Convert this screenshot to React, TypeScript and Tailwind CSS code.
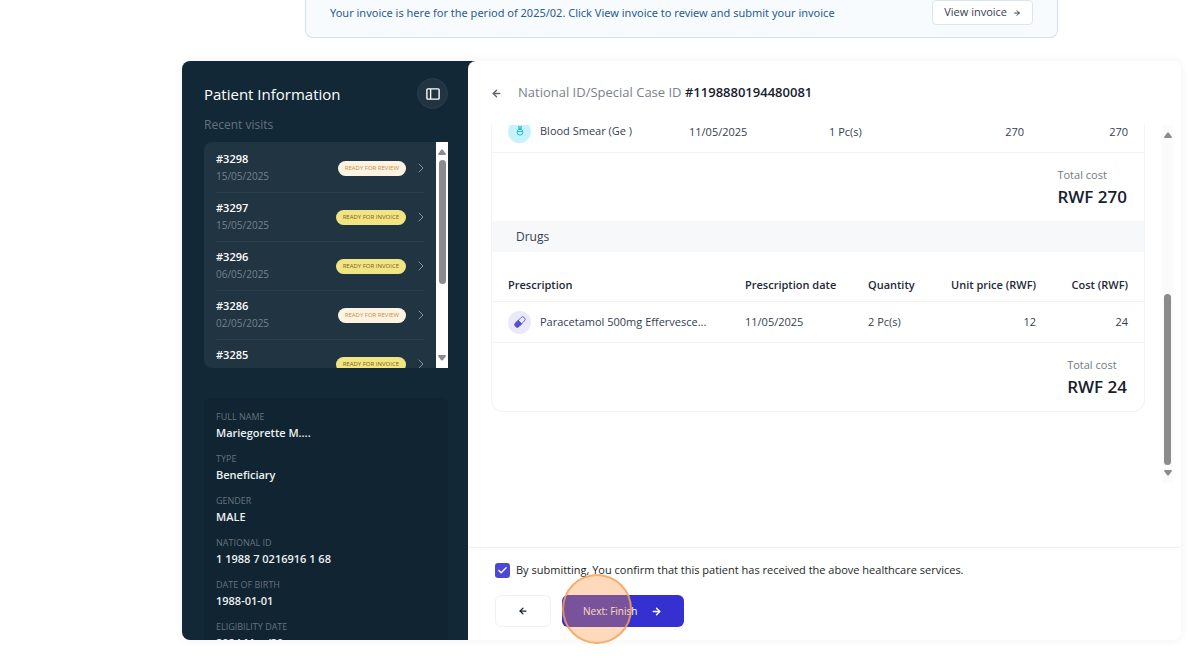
import { ArrowLeft, ArrowRight, Check, ChevronRight } from 'lucide-react';

type Status = 'review' | 'invoice';

const visits: { id: string; date: string; status: Status }[] = [
  { id: '#3298', date: '15/05/2025', status: 'review' },
  { id: '#3297', date: '15/05/2025', status: 'invoice' },
  { id: '#3296', date: '06/05/2025', status: 'invoice' },
  { id: '#3286', date: '02/05/2025', status: 'review' },
  { id: '#3285', date: '02/05/2025', status: 'invoice' },
];

const details = [
  { label: 'Full name', value: 'Mariegorette M....' },
  { label: 'Type', value: 'Beneficiary' },
  { label: 'Gender', value: 'MALE' },
  { label: 'National ID', value: '1 1988 7 0216916 1 68' },
  { label: 'Date of birth', value: '1988-01-01' },
  { label: 'Eligibility date', value: '2024 May/30' },
];

export default function App() {
  return (
    <div className="h-screen overflow-hidden bg-white pl-[182px] pr-[19px] font-['Open_Sans',sans-serif] text-[11px] text-[#344054]">
      <InvoiceBanner />
      <div className="mt-[23px] flex h-[calc(100vh-91px)] rounded-lg shadow-[0_0_10px_rgba(16,24,40,0.06)]">
        <Sidebar />
        <Consultation />
      </div>
    </div>
  );
}

function InvoiceBanner() {
  return (
    <div className="mx-auto flex max-w-[753px] items-start justify-between rounded-b-lg border border-t-0 border-[#cfe2f3] bg-[#f7fbfe] px-6 pb-3">
      <p className="pt-1 font-['Noto_Sans',sans-serif] text-[11px] leading-[18px] text-[#2b5c92]">
        Your invoice is here for the period of 2025/02. Click View invoice to review and submit your invoice
      </p>
      <button className="flex h-[25px] items-center gap-1.5 rounded border border-[#d9e6ee] bg-white px-[11px] text-[11px] text-[#344054]">
        View invoice
        <ArrowRight size={8} strokeWidth={3} />
      </button>
    </div>
  );
}

function Sidebar() {
  return (
    <aside className="w-[294px] shrink-0 overflow-hidden rounded-l-lg bg-[#122836] pr-7 pl-[22px]">
      <div className="flex items-center justify-between pt-[17px]">
        <h2 className="text-[15px] leading-5 font-medium text-white">Patient Information</h2>
        <button
          aria-label="Toggle sidebar"
          className="grid size-[31px] place-items-center rounded-full border border-[#2a3d49] bg-[#203442] text-white"
        >
          <svg width="14" height="12" viewBox="0 0 14 12" fill="none" stroke="currentColor" strokeWidth="1.4">
            <rect x="0.9" y="0.9" width="12.2" height="10.2" rx="0.8" />
            <path d="M4.6 1v10" />
          </svg>
        </button>
      </div>
      <p className="mt-[7px] text-xs leading-[17px] text-[#64737e]">Recent visits</p>

      <div className="mt-[9px] flex h-[226px] overflow-hidden rounded-l-lg bg-[#203442]">
        <ul className="flex-1 px-3 pt-0.5">
          {visits.map((v) => (
            <li key={v.id} className="flex h-[49px] items-center border-b border-[#2a3f4c]">
              <div className="flex-1">
                <div className="text-[11px] leading-4 font-semibold text-white">{v.id}</div>
                <div className="text-[10px] leading-[18px] text-[#74838d]">{v.date}</div>
              </div>
              <StatusBadge status={v.status} />
              <ChevronRight size={16} strokeWidth={1.5} className="-mr-[5px] ml-[7px] text-[#8794a0]" />
            </li>
          ))}
        </ul>
        <div className="flex w-3 flex-col items-center bg-white py-[7px] text-[#8b8b8b]">
          <ScrollArrow dir="up" />
          <div className="mt-[5px] h-[124px] w-[7px] rounded-full bg-[#8b8b8b]" />
          <div className="flex-1" />
          <ScrollArrow dir="down" />
        </div>
      </div>

      <dl className="mt-[30px] rounded-lg bg-[#102431] px-3 pt-3">
        {details.map((d) => (
          <div key={d.label} className="h-[42px]">
            <dt className="text-[9px] leading-[14px] text-[#64737e] uppercase">{d.label}</dt>
            <dd className="text-[11px] leading-[18px] font-semibold text-[#eef1f3]">{d.value}</dd>
          </div>
        ))}
      </dl>
    </aside>
  );
}

function StatusBadge({ status }: { status: Status }) {
  if (status === 'review') {
    return (
      <span className="rounded-full bg-[#fdf3e3] px-[7px] text-[6px] leading-[15px] text-[#d08a34]">
        READY FOR REVIEW
      </span>
    );
  }
  return (
    <span className="rounded-full bg-[#f0e483] px-[7px] text-[6px] leading-[15px] text-[#80601c]">
      READY FOR INVOICE
    </span>
  );
}

function ScrollArrow({ dir }: { dir: 'up' | 'down' }) {
  return (
    <svg width="8" height="6" viewBox="0 0 8 6" fill="currentColor" className="shrink-0">
      {dir === 'up' ? <path d="M3.4.4h1.2L8 5 7.4 6H.6L0 5Z" /> : <path d="M3.4 5.6h1.2L8 1 7.4 0H.6L0 1Z" />}
    </svg>
  );
}

function Consultation() {
  return (
    <main className="-ml-2 flex min-w-0 flex-1 flex-col rounded-t-lg rounded-br-lg bg-white">
      <header className="flex h-16 shrink-0 items-center pl-[23px]">
        <button aria-label="Back" className="text-[#5d6670]">
          <ArrowLeft size={11} strokeWidth={3} />
        </button>
        <h1 className="ml-4 text-[13px] text-[#7a828c]">
          National ID/Special Case ID <span className="font-semibold text-[#17212d]">#1198880194480081</span>
        </h1>
      </header>

      <div className="mb-16 flex min-h-0 flex-1 pr-2 pl-[23px]">
        {/* list is scrolled to its end */}
        <div className="flex flex-1 flex-col justify-end overflow-hidden pb-[71px]">
          <div className="rounded-b-xl border border-t-0 border-[#f1f3f5]">
            <LabTable />
            <Total amount="RWF 270" />
            <h3 className="bg-[#f7f8fa] pl-6 text-xs leading-[31px]">Drugs</h3>
            <DrugsTable />
            <Total amount="RWF 24" />
          </div>
        </div>
        <div className="ml-[17px] flex w-[11px] flex-col items-center bg-[#fbfbfb] py-[7px] text-[#8b8b8b]">
          <ScrollArrow dir="up" />
          <div className="flex-1" />
          <div className="mb-[5px] h-[171px] w-[7px] rounded-full bg-[#8b8b8b]" />
          <ScrollArrow dir="down" />
        </div>
      </div>

      <footer className="border-t border-[#eff1f3] pb-[13px] pl-[27px]">
        <div className="flex items-center pt-3">
          <span className="relative size-[15px]">
            <input
              id="confirm"
              type="checkbox"
              defaultChecked
              className="block size-[15px] appearance-none rounded-[3px] bg-[#4a48d4]"
            />
            <Check size={11} strokeWidth={3} className="pointer-events-none absolute top-0.5 left-0.5 text-white" />
          </span>
          <label htmlFor="confirm" className="pl-1.5 text-[11px] leading-5 text-[#1b1f24]">
            By submitting, You confirm that this patient has received the above healthcare services.
          </label>
        </div>
        <div className="mt-[15px] flex gap-[11px]">
          <button
            aria-label="Previous"
            className="grid h-8 w-14 place-items-center rounded-md border border-[#eff1f3] text-[#17212d]"
          >
            <ArrowLeft size={10} strokeWidth={3} />
          </button>
          <div className="relative">
            <button className="flex h-8 w-[122px] items-center gap-3.5 rounded-md bg-[#3431d0] pl-[21px] text-[10px] font-medium text-white">
              Next: Finish
              <ArrowRight size={11} strokeWidth={3} />
            </button>
            {/* click marker */}
            <span className="pointer-events-none absolute -top-[21px] left-0 size-[70px] rounded-full border-2 border-[#f5a25a]/80 bg-[#fb923c]/35" />
          </div>
        </div>
      </footer>
    </main>
  );
}

function LabTable() {
  return (
    <table className="w-full table-fixed">
      <colgroup>
        <col />
        <col className="w-[140px]" />
        <col className="w-[110px]" />
        <col className="w-[117px]" />
        <col className="w-[104px]" />
      </colgroup>
      <tbody>
        <tr className="h-[41px] border-b border-[#f1f3f5]">
          <td className="pl-4">
            <div className="flex items-center gap-[9px]">
              <FlaskIcon />
              Blood Smear (Ge )
            </div>
          </td>
          <td className="pt-0.5 pl-4">11/05/2025</td>
          <td className="pt-0.5 pl-4">1 Pc(s)</td>
          <td className="pt-0.5 pr-4 text-right">270</td>
          <td className="pt-0.5 pr-4 text-right">270</td>
        </tr>
      </tbody>
    </table>
  );
}

function DrugsTable() {
  return (
    <table className="w-full table-fixed">
      <colgroup>
        <col />
        <col className="w-[123px]" />
        <col className="w-[83px]" />
        <col className="w-[117px]" />
        <col className="w-[92px]" />
      </colgroup>
      <thead>
        <tr className="h-[50px] border-b border-[#f1f3f5] text-left align-bottom text-[#1d2939]">
          <th className="pb-2 pl-4 font-semibold">Prescription</th>
          <th className="pb-2 pl-4 font-semibold whitespace-nowrap">Prescription date</th>
          <th className="pb-2 pl-4 font-semibold">Quantity</th>
          <th className="pr-4 pb-2 text-right font-semibold whitespace-nowrap">Unit price (RWF)</th>
          <th className="pr-4 pb-2 text-right font-semibold whitespace-nowrap">Cost (RWF)</th>
        </tr>
      </thead>
      <tbody>
        <tr className="h-[41px] border-b border-[#f1f3f5]">
          <td className="pl-4">
            <div className="flex items-center gap-[9px]">
              <PillIcon />
              Paracetamol 500mg Effervesce...
            </div>
          </td>
          <td className="pl-4">11/05/2025</td>
          <td className="pl-4">2 Pc(s)</td>
          <td className="pr-4 text-right">12</td>
          <td className="pr-4 text-right">24</td>
        </tr>
      </tbody>
    </table>
  );
}

function Total({ amount }: { amount: string }) {
  return (
    <div className="flex h-[68px] justify-end pt-3 pr-[17px]">
      <div>
        <div className="text-[11px] leading-5 text-[#717983]">Total cost</div>
        <div className="text-[17px] leading-6 font-semibold text-[#17212d]">{amount}</div>
      </div>
    </div>
  );
}

function FlaskIcon() {
  return (
    <span className="grid size-[23px] shrink-0 place-items-center rounded-full bg-[#c8f1fb] text-[#22bccb]">
      <svg width="10" height="12" viewBox="0 0 10 12" fill="none" stroke="currentColor" strokeWidth="1">
        <path d="M3 1.8h4M3.9 2v2.4M6.1 2v2.4M3.9 3.4h2.2" />
        <circle cx="5" cy="7.2" r="2.9" />
        <path d="M2.4 6.4h5.2" />
      </svg>
    </span>
  );
}

function PillIcon() {
  return (
    <span className="grid size-[23px] shrink-0 place-items-center rounded-full bg-[#e9e9fa] text-[#5650cc]">
      <svg width="12" height="12" viewBox="0 0 12 12" fill="none" stroke="currentColor">
        <g transform="rotate(45 6 6)">
          <rect x="3.6" y="-0.2" width="4.8" height="12.4" rx="2.4" strokeWidth="0.8" />
          <path d="M3.6 6h4.8v3.8a2.4 2.4 0 0 1-4.8 0Z" fill="currentColor" strokeWidth="0.8" />
        </g>
      </svg>
    </span>
  );
}
